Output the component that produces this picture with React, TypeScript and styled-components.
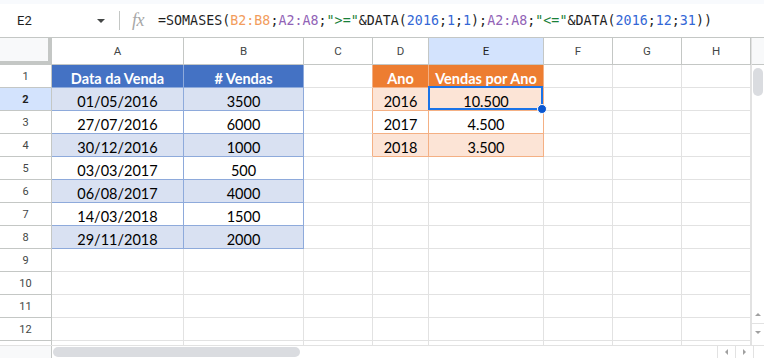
import React from "react";
import styled, { createGlobalStyle } from "styled-components";

const GlobalStyle = createGlobalStyle`
  html, body { margin: 0; padding: 0; background: #fff; overflow: hidden; }
  body { font-family: Roboto, "Liberation Sans", sans-serif; }
  * { box-sizing: border-box; }
`;

const GRID = "#e2e2e2";
const HEAD_LINE = "#c4c7c5";
const BLUE_LINE = "#8eaadb";
const ORANGE_LINE = "#f4b084";

const Frame = styled.div`
  width: 764px;
  height: 358px;
  display: flex;
  flex-direction: column;
  background: #fff;
  overflow: hidden;
`;

const FormulaBar = styled.div`
  height: 38px;
  flex: none;
  display: flex;
  align-items: center;
  border-top: 4px solid #f8fafd;
  border-bottom: 1px solid ${HEAD_LINE};
`;

const NameBox = styled.div`
  width: 119px;
  height: 100%;
  display: flex;
  align-items: center;
  justify-content: space-between;
  padding-left: 17px;
  padding-right: 14px;
  font-size: 13px;
  color: #1f1f1f;
`;

const Caret = styled.span`
  width: 0;
  height: 0;
  border-left: 4px solid transparent;
  border-right: 4px solid transparent;
  border-top: 4px solid #444746;
  margin-top: 1px;
`;

const Divider = styled.span`
  width: 1px;
  height: 19px;
  background: ${HEAD_LINE};
  flex: none;
`;

const Fx = styled.span`
  margin-left: 12px;
  width: 16px;
  font-family: "Liberation Serif", serif;
  font-style: italic;
  font-size: 18px;
  color: #a7a7a7;
  letter-spacing: -0.5px;
  line-height: 1;
  margin-top: -1px;
`;

const Formula = styled.div`
  margin-left: 10px;
  font-family: "DejaVu Sans Mono", "Liberation Mono", monospace;
  font-size: 13.3px;
  color: #1f1f1f;
  white-space: pre;
  letter-spacing: 0.02px;
`;

const Tok = styled.span<{ $c: string }>`
  color: ${(p) => p.$c};
`;

const Body = styled.div`
  flex: 1;
  display: flex;
  min-height: 0;
`;

const Grid = styled.div`
  width: 751px;
  flex: none;
  overflow: hidden;
  display: grid;
  grid-template-columns: 52px 132px 120px 69px 56px 115px 69px 69px 69px;
  grid-template-rows: 27px;
  grid-auto-rows: 23px;
  align-content: start;
`;

const Corner = styled.div`
  background: #f8f9fa;
  border-right: 4px solid ${HEAD_LINE};
  border-bottom: 4px solid ${HEAD_LINE};
`;

const ColHead = styled.div<{ $active?: boolean }>`
  display: flex;
  align-items: center;
  justify-content: center;
  font-size: 11.5px;
  color: ${(p) => (p.$active ? "#1f1f1f" : "#444746")};
  background: ${(p) => (p.$active ? "#d3e3fd" : "#fff")};
  border-right: 1px solid ${HEAD_LINE};
  border-bottom: 1px solid ${HEAD_LINE};
`;

const RowHead = styled.div<{ $active?: boolean }>`
  display: flex;
  align-items: center;
  justify-content: center;
  font-size: 11px;
  font-weight: ${(p) => (p.$active ? 700 : 400)};
  color: ${(p) => (p.$active ? "#1f1f1f" : "#444746")};
  background: ${(p) => (p.$active ? "#d3e3fd" : "#fff")};
  border-right: 1px solid ${HEAD_LINE};
  border-bottom: 1px solid ${HEAD_LINE};
`;

const Cell = styled.div<{
  $bg: string;
  $fg: string;
  $bold: boolean;
  $br: string;
  $bb: string;
}>`
  position: relative;
  display: flex;
  align-items: flex-end;
  justify-content: center;
  font-family: Lato, "Open Sans", sans-serif;
  font-size: 14.5px;
  line-height: 17px;
  font-weight: ${(p) => (p.$bold ? 700 : 400)};
  color: ${(p) => p.$fg};
  background: ${(p) => p.$bg};
  border-right: 1px solid ${(p) => p.$br};
  border-bottom: 1px solid ${(p) => p.$bb};
  white-space: nowrap;
`;

const Selection = styled.div`
  position: absolute;
  top: -2px;
  left: -1px;
  right: 0;
  bottom: 0;
  border: 2px solid #1a73e8;
  z-index: 2;
  pointer-events: none;
`;

const Handle = styled.div`
  position: absolute;
  right: -6px;
  bottom: -6px;
  width: 10px;
  height: 10px;
  border-radius: 50%;
  background: #0b57d0;
  border: 1px solid #fff;
`;

const VScroll = styled.div`
  width: 13px;
  flex: none;
  display: flex;
  flex-direction: column;
  border-left: 1px solid ${GRID};
`;

const VCorner = styled.div`
  height: 27px;
  background: #f8f9fa;
  border-bottom: 1px solid ${HEAD_LINE};
`;

const VTrack = styled.div`
  flex: 1;
  padding: 3px 0 0 1px;
`;

const VThumb = styled.div`
  width: 10px;
  height: 28px;
  border-radius: 5px;
  background: #dadce0;
`;

const ArrowBtn = styled.div<{ $dir: "up" | "down" | "left" | "right" }>`
  display: flex;
  align-items: center;
  justify-content: center;
  flex: none;
  width: ${(p) => (p.$dir === "up" || p.$dir === "down" ? "12px" : "18px")};
  height: ${(p) => (p.$dir === "up" || p.$dir === "down" ? "18px" : "12px")};
  border-top: ${(p) => (p.$dir === "down" ? `1px solid ${GRID}` : "none")};
  border-left: ${(p) => (p.$dir === "left" || p.$dir === "right" ? `1px solid ${GRID}` : "none")};
  &::after {
    content: "";
    width: 0;
    height: 0;
    ${(p) =>
      p.$dir === "up"
        ? "border-left:3px solid transparent;border-right:3px solid transparent;border-bottom:3px solid #a0a0a0;"
        : p.$dir === "down"
        ? "border-left:3px solid transparent;border-right:3px solid transparent;border-top:3px solid #a0a0a0;"
        : p.$dir === "left"
        ? "border-top:3px solid transparent;border-bottom:3px solid transparent;border-right:3px solid #a0a0a0;"
        : "border-top:3px solid transparent;border-bottom:3px solid transparent;border-left:3px solid #a0a0a0;"}
  }
`;

const VArrows = styled.div`
  display: flex;
  flex-direction: column;
  margin-bottom: 4px;
`;

const HScroll = styled.div`
  height: 13px;
  flex: none;
  display: flex;
  border-top: 1px solid ${GRID};
`;

const HCorner = styled.div`
  width: 52px;
  flex: none;
  background: #f8f9fa;
  border-right: 1px solid ${HEAD_LINE};
`;

const HTrack = styled.div`
  flex: 1;
  padding: 1px 0 0 1px;
`;

const HThumb = styled.div`
  width: 247px;
  height: 10px;
  border-radius: 5px;
  background: #dadce0;
`;

const HEnd = styled.div`
  width: 11px;
  flex: none;
  border-left: 1px solid ${GRID};
`;

const COLS = ["A", "B", "C", "D", "E", "F", "G", "H"];
const ROWS = Array.from({ length: 13 }, (_, i) => i + 1);
const LAST_LABELLED_ROW = 12;

const AB: Record<number, [string, string]> = {
  1: ["Data da Venda", "# Vendas"],
  2: ["01/05/2016", "3500"],
  3: ["27/07/2016", "6000"],
  4: ["30/12/2016", "1000"],
  5: ["03/03/2017", "500"],
  6: ["06/08/2017", "4000"],
  7: ["14/03/2018", "1500"],
  8: ["29/11/2018", "2000"],
};

const DE: Record<number, [string, string]> = {
  1: ["Ano", "Vendas por Ano"],
  2: ["2016", "10.500"],
  3: ["2017", "4.500"],
  4: ["2018", "3.500"],
};

type CellInfo = { text: string; bg: string; fg: string; bold: boolean; br: string; bb: string };

function cellInfo(r: number, c: string): CellInfo {
  const info: CellInfo = { text: "", bg: "#fff", fg: "#000", bold: false, br: GRID, bb: GRID };
  if ((c === "A" || c === "B") && AB[r]) {
    info.text = AB[r][c === "A" ? 0 : 1];
    info.br = BLUE_LINE;
    info.bb = BLUE_LINE;
    if (r === 1) {
      info.bg = "#4472c4";
      info.fg = "#fff";
      info.bold = true;
    } else if (r % 2 === 0) {
      info.bg = "#d9e1f2";
    }
  }
  if ((c === "D" || c === "E") && DE[r]) {
    info.text = DE[r][c === "D" ? 0 : 1];
    info.br = ORANGE_LINE;
    info.bb = ORANGE_LINE;
    if (r === 1) {
      info.bg = "#ed7d31";
      info.fg = "#fff";
      info.bold = true;
    } else if (r % 2 === 0) {
      info.bg = "#fce4d6";
    }
  }
  if (c === "C" && r <= 4) info.br = ORANGE_LINE;
  return info;
}

const FormulaLine = () => (
  <Formula>
    <Tok $c="#1f1f1f">=SOMASES(</Tok>
    <Tok $c="#f29c5c">B2:B8</Tok>
    <Tok $c="#1f1f1f">;</Tok>
    <Tok $c="#9163b6">A2:A8</Tok>
    <Tok $c="#1f1f1f">;</Tok>
    <Tok $c="#188038">"&gt;="</Tok>
    <Tok $c="#1f1f1f">&amp;DATA(</Tok>
    <Tok $c="#3367d6">2016</Tok>
    <Tok $c="#1f1f1f">;</Tok>
    <Tok $c="#3367d6">1</Tok>
    <Tok $c="#1f1f1f">;</Tok>
    <Tok $c="#3367d6">1</Tok>
    <Tok $c="#1f1f1f">);</Tok>
    <Tok $c="#9163b6">A2:A8</Tok>
    <Tok $c="#1f1f1f">;</Tok>
    <Tok $c="#188038">"&lt;="</Tok>
    <Tok $c="#1f1f1f">&amp;DATA(</Tok>
    <Tok $c="#3367d6">2016</Tok>
    <Tok $c="#1f1f1f">;</Tok>
    <Tok $c="#3367d6">12</Tok>
    <Tok $c="#1f1f1f">;</Tok>
    <Tok $c="#3367d6">31</Tok>
    <Tok $c="#1f1f1f">))</Tok>
  </Formula>
);

export default function App() {
  return (
    <>
      <GlobalStyle />
      <Frame>
        <FormulaBar>
          <NameBox>
            <span>E2</span>
            <Caret />
          </NameBox>
          <Divider />
          <Fx>fx</Fx>
          <FormulaLine />
        </FormulaBar>
        <Body>
          <Grid>
            <Corner />
            {COLS.map((c) => (
              <ColHead key={c} $active={c === "E"}>
                {c}
              </ColHead>
            ))}
            {ROWS.map((r) => (
              <React.Fragment key={r}>
                <RowHead $active={r === 2}>{r <= LAST_LABELLED_ROW ? r : ""}</RowHead>
                {COLS.map((c) => {
                  const ci = cellInfo(r, c);
                  return (
                    <Cell key={c} $bg={ci.bg} $fg={ci.fg} $bold={ci.bold} $br={ci.br} $bb={ci.bb}>
                      {ci.text}
                      {r === 2 && c === "E" && (
                        <Selection>
                          <Handle />
                        </Selection>
                      )}
                    </Cell>
                  );
                })}
              </React.Fragment>
            ))}
          </Grid>
          <VScroll>
            <VCorner />
            <VTrack>
              <VThumb />
            </VTrack>
            <VArrows>
              <ArrowBtn $dir="up" />
              <ArrowBtn $dir="down" />
            </VArrows>
          </VScroll>
        </Body>
        <HScroll>
          <HCorner />
          <HTrack>
            <HThumb />
          </HTrack>
          <ArrowBtn $dir="left" />
          <ArrowBtn $dir="right" />
          <HEnd />
        </HScroll>
      </Frame>
    </>
  );
}
